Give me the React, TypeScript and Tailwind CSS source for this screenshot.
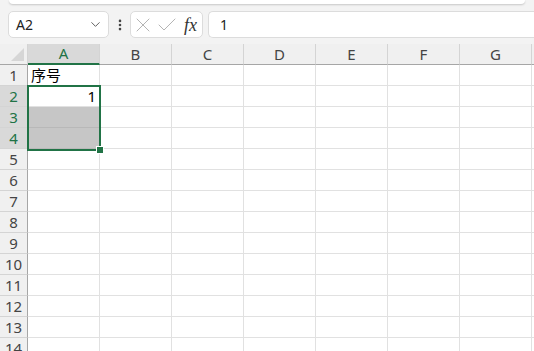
import { Check, ChevronDown, EllipsisVertical, X } from "lucide-react";

const columns = ["A", "B", "C", "D", "E", "F", "G", ""];
const rows = Array.from({ length: 15 }, (_, i) => i + 1);

function HeaderRow() {
  return (
    <div className="flex h-[21px]">
      <div className="relative w-[28px] shrink-0 border-b border-r border-b-[#a6a6a6] border-r-[#d4d4d4] bg-[#f0f0f0]">
        <svg width="13" height="13" viewBox="0 0 13 13" className="absolute bottom-[3px] right-[3px]">
          <polygon points="0,13 13,0 13,13" fill="#d6d6d6" />
        </svg>
      </div>
      {columns.map((col, i) => (
        <div
          key={i}
          className={`flex w-[72px] shrink-0 items-center justify-center border-r border-r-[#d4d4d4] text-[15px] ${
            col === "A"
              ? "border-b-2 border-b-[#217346] bg-[#d9d9d9] text-[#217346]"
              : "border-b border-b-[#a6a6a6] bg-[#f0f0f0] text-[#444]"
          }`}
        >
          {col}
        </div>
      ))}
    </div>
  );
}

function DataRow({ n }: { n: number }) {
  const selected = n >= 2 && n <= 4;
  return (
    <div className="flex h-[21px]">
      <div
        className={`flex w-[28px] shrink-0 items-center justify-center border-b border-r border-b-[#d4d4d4] border-r-[#a6a6a6] text-[15px] ${
          selected ? "bg-[#d9d9d9] text-[#217346]" : "bg-[#f0f0f0] text-[#444]"
        }`}
      >
        {n}
      </div>
      {columns.map((col, i) => {
        const grey = col === "A" && (n === 3 || n === 4);
        return (
          <div
            key={i}
            className={`flex w-[72px] shrink-0 items-center border-b border-r px-[3px] text-[15px] text-black ${
              grey ? "border-b-[#b8b8b8] border-r-[#e1e1e1] bg-[#c6c6c6]" : "border-[#e1e1e1] bg-white"
            } ${col === "A" && n === 2 ? "justify-end" : ""}`}
          >
            {col === "A" && n === 1 && "序号"}
            {col === "A" && n === 2 && "1"}
          </div>
        );
      })}
    </div>
  );
}

export default function App() {
  return (
    <div
      className="h-[351px] w-[534px] overflow-hidden bg-[#f3f3f3]"
      style={{ fontFamily: '"Noto Sans", "Noto Sans CJK SC", sans-serif' }}
    >
      <div className="mx-[9px] h-[4px] rounded-b-[6px] bg-white shadow-[0_1px_2px_rgba(0,0,0,0.18)]" />

      <div className="mt-[7px] flex h-[27px] items-stretch pl-[8px]">
        <div className="flex w-[101px] items-center justify-between rounded-[5px] border border-[#dcdcdc] bg-white pl-[7px] pr-[5px] text-[14px] text-[#222]">
          <span>A2</span>
          <ChevronDown size={15} strokeWidth={1.5} className="text-[#555]" />
        </div>
        <div className="flex w-[21px] items-center justify-center">
          <EllipsisVertical size={14} strokeWidth={2.5} className="text-[#444]" />
        </div>
        <div className="flex w-[73px] items-center rounded-[5px] border border-[#dcdcdc] bg-white">
          <X size={24} strokeWidth={1} className="text-[#b4b4b4]" />
          <Check size={24} strokeWidth={1} className="text-[#b4b4b4]" />
          <span
            className="ml-[5px] text-[18px] italic leading-none text-[#333]"
            style={{ fontFamily: '"Liberation Serif", serif' }}
          >
            fx
          </span>
        </div>
        <div className="ml-[5px] flex flex-1 items-center rounded-l-[5px] border border-r-0 border-[#dcdcdc] bg-white pl-[11px] text-[14px] text-[#222]">
          1
        </div>
      </div>

      <div className="relative mt-[6px]">
        <HeaderRow />
        {rows.map((n) => (
          <DataRow key={n} n={n} />
        ))}
        <div className="pointer-events-none absolute left-[27px] top-[41px] h-[66px] w-[74px] border-2 border-[#217346]" />
        <div className="pointer-events-none absolute left-[97px] top-[103px] h-[6px] w-[6px] bg-[#217346] outline outline-1 outline-white" />
      </div>
    </div>
  );
}
